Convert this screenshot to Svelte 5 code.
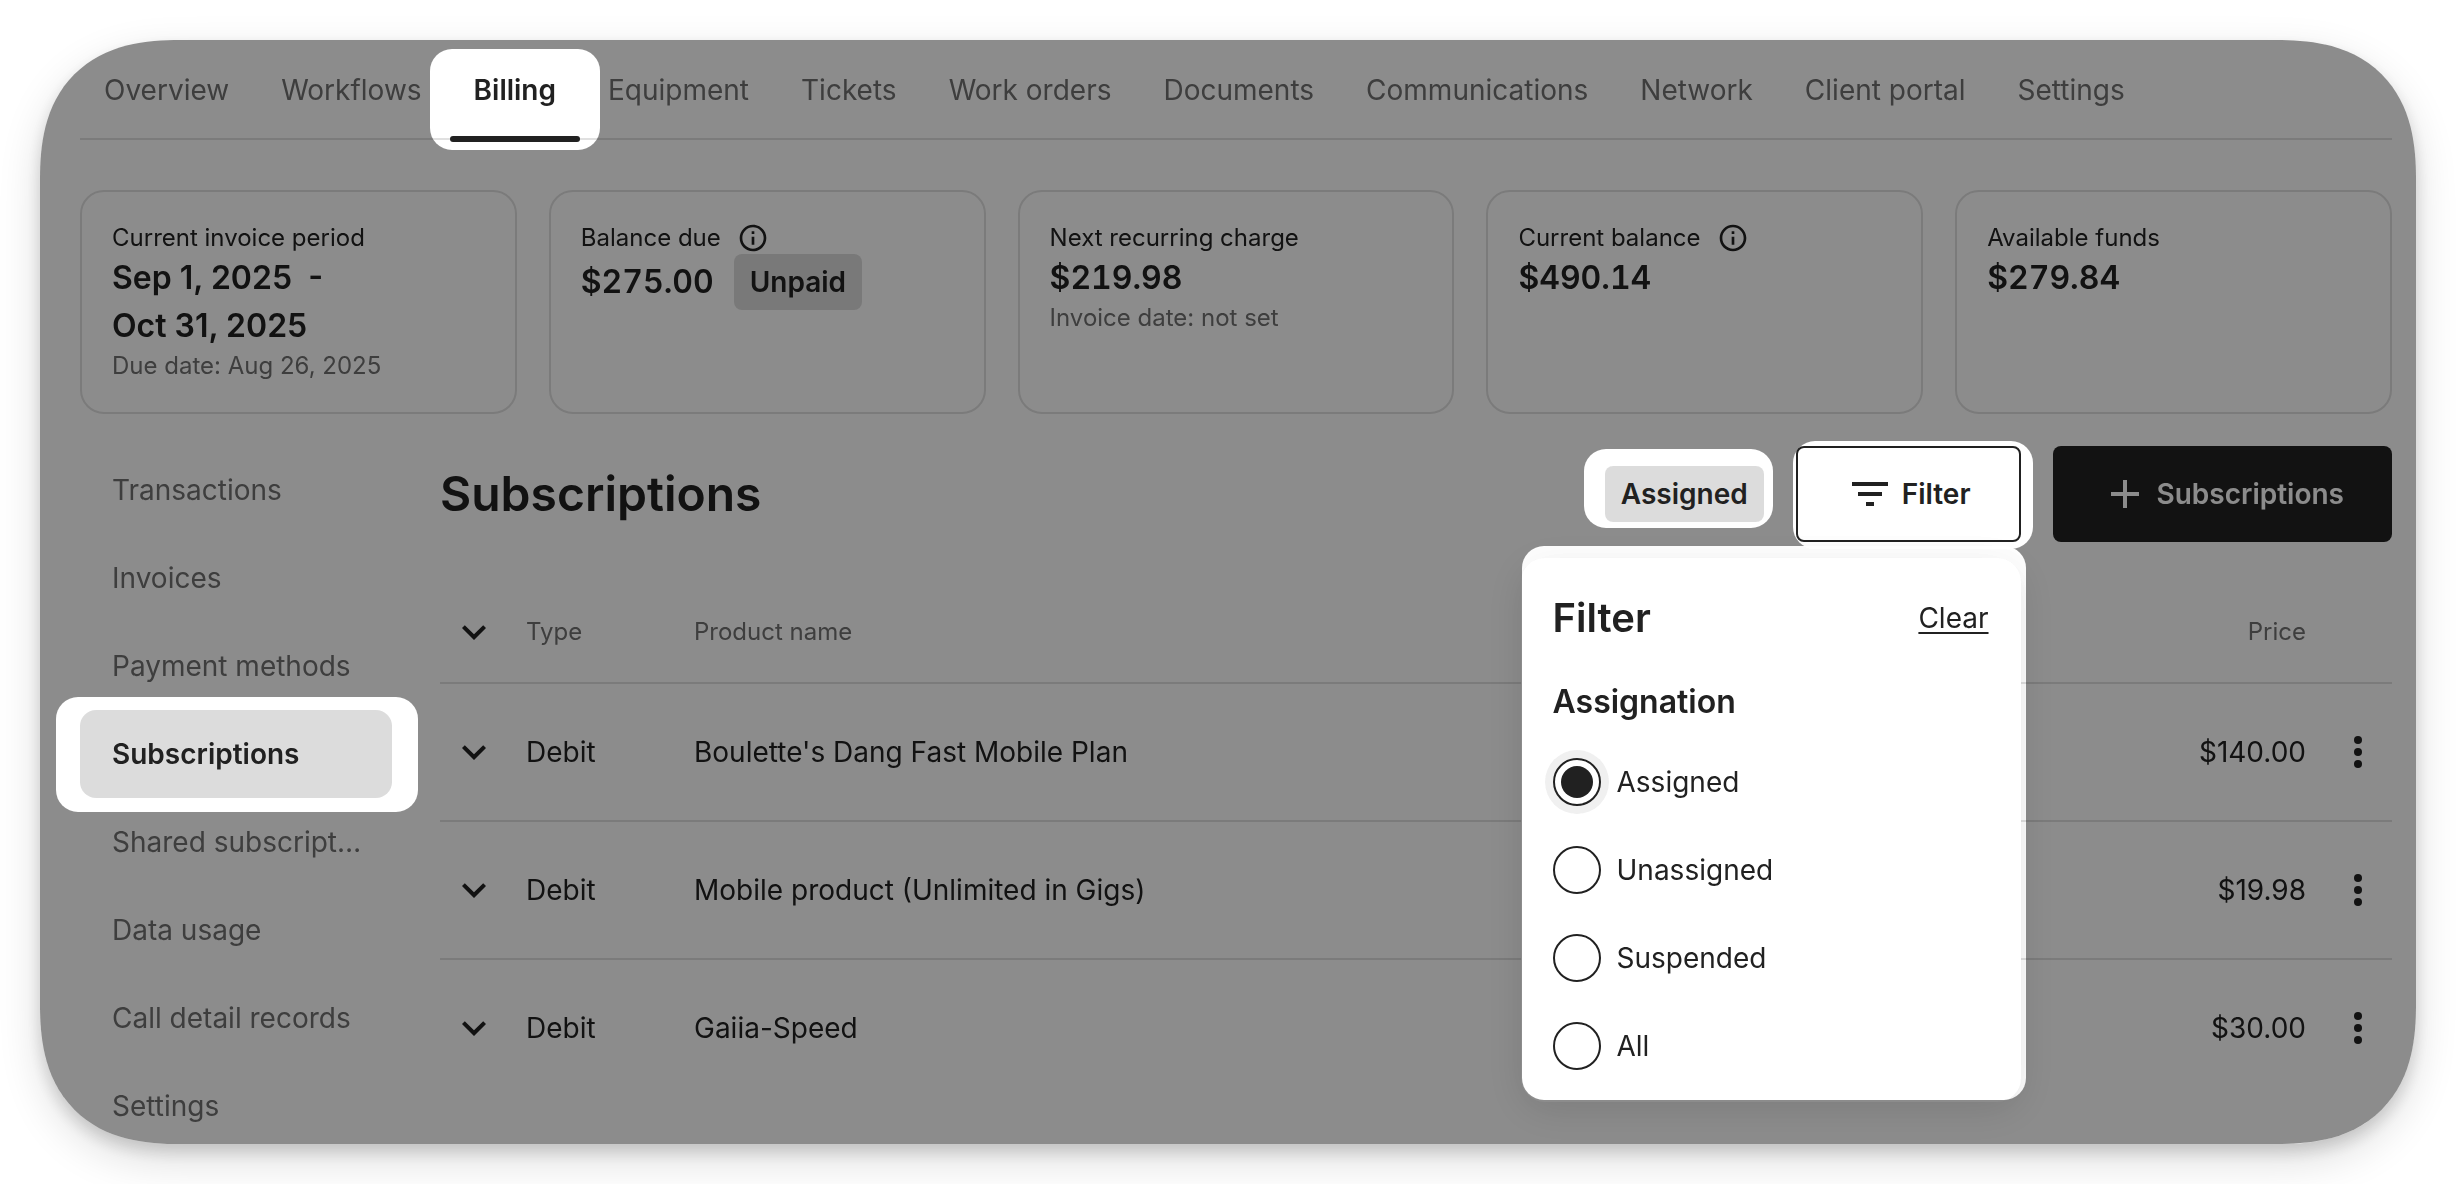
<script lang="ts">
  const tabs = [
    'Overview', 'Workflows', 'Billing', 'Equipment', 'Tickets', 'Work orders',
    'Documents', 'Communications', 'Network', 'Client portal', 'Settings',
  ];
  const sections = [
    'Transactions', 'Invoices', 'Payment methods', 'Subscriptions',
    'Shared subscript…', 'Data usage', 'Call detail records', 'Settings',
  ];
  const cards = [
    { label: 'Current invoice period', value: ['Sep 1, 2025  -', 'Oct 31, 2025'], note: 'Due date: Aug 26, 2025' },
    { label: 'Balance due', info: true, money: true, value: ['$275.00'], badge: 'Unpaid' },
    { label: 'Next recurring charge', money: true, value: ['$219.98'], note: 'Invoice date: not set' },
    { label: 'Current balance', info: true, money: true, value: ['$490.14'] },
    { label: 'Available funds', money: true, value: ['$279.84'] },
  ];
  const rows = [
    { type: 'Debit', name: "Boulette's Dang Fast Mobile Plan", price: '$140.00' },
    { type: 'Debit', name: 'Mobile product (Unlimited in Gigs)', price: '$19.98' },
    { type: 'Debit', name: 'Gaiia-Speed', price: '$30.00' },
  ];
  const options = ['Assigned', 'Unassigned', 'Suspended', 'All'];
  let assignation = $state('Assigned');
</script>

{#snippet chevron()}
  <svg class="icon" viewBox="0 0 24 24" aria-hidden="true"><path d="M7.41 8.59 12 13.17l4.59-4.58L18 10l-6 6-6-6z" /></svg>
{/snippet}

<div class="page">
  <div class="panel">
    <nav class="tabs" aria-label="Account">
      {#each tabs as tab}
        <a href="#top" class="tab" class:active={tab === 'Billing'}>
          {tab}
          {#if tab === 'Billing'}<span class="spot spot-tab"></span>{/if}
        </a>
      {/each}
    </nav>

    <section class="cards">
      {#each cards as card}
        <article class="card">
          <div class="label">
            {card.label}
            {#if card.info}
              <svg class="info" viewBox="0 0 24 24" aria-hidden="true">
                <path d="M11 7h2v2h-2zm0 4h2v6h-2zm1-9C6.480 2 2 6.480 2 12s4.480 10 10 10 10-4.480 10-10S17.520 2 12 2zm0 18c-4.410 0-8-3.590-8-8s3.590-8 8-8 8 3.590 8 8-3.590 8-8 8z" />
              </svg>
            {/if}
          </div>
          <div class="value">
            <div>{#each card.value as line}<div class="amount" class:money={card.money}>{line}</div>{/each}</div>
            {#if card.badge}<span class="chip">{card.badge}</span>{/if}
          </div>
          {#if card.note}<div class="note">{card.note}</div>{/if}
        </article>
      {/each}
    </section>

    <div class="body">
      <nav class="side" aria-label="Billing">
        {#each sections as section}
          <a href="#top" class="side-item" class:selected={section === 'Subscriptions'}>
            {section}
            {#if section === 'Subscriptions'}<span class="spot spot-side"></span>{/if}
          </a>
        {/each}
      </nav>

      <main class="main">
        <header class="head">
          <h1>Subscriptions</h1>
          <div class="anchor">
            <span class="chip">Assigned</span>
            <span class="spot spot-chip"></span>
          </div>
          <div class="anchor">
            <button class="btn outline" type="button">
              <svg class="icon" viewBox="0 0 24 24" aria-hidden="true"><path d="M10 18h4v-2h-4v2zM3 6v2h18V6H3zm3 7h12v-2H6v2z" /></svg>
              Filter
            </button>
            <span class="spot spot-btn"></span>
            <div class="menu-anchor">
              <form class="menu">
                <div class="menu-head">
                  <h2>Filter</h2>
                  <button class="clear" type="button">Clear</button>
                </div>
                <fieldset>
                  <legend>Assignation</legend>
                  {#each options as option}
                    <label class="option">
                      <input type="radio" name="assignation" value={option} bind:group={assignation} />
                      {option}
                    </label>
                  {/each}
                </fieldset>
              </form>
              <span class="spot spot-menu"></span>
            </div>
          </div>
          <button class="btn solid" type="button">
            <svg class="icon" viewBox="0 0 24 24" aria-hidden="true"><path d="M19 13h-6v6h-2v-6H5v-2h6V5h2v6h6z" /></svg>
            Subscriptions
          </button>
        </header>

        <table>
          <thead>
            <tr>
              <th class="c-toggle"><button class="icon-btn" type="button" aria-label="Expand all">{@render chevron()}</button></th>
              <th class="c-type">Type</th>
              <th>Product name</th>
              <th class="c-price">Price</th>
              <th class="c-more"></th>
            </tr>
          </thead>
          <tbody>
            {#each rows as row}
              <tr>
                <td class="c-toggle"><button class="icon-btn" type="button" aria-label="Expand">{@render chevron()}</button></td>
                <td>{row.type}</td>
                <td>{row.name}</td>
                <td class="c-price">{row.price}</td>
                <td class="c-more">
                  <button class="icon-btn" type="button" aria-label="More actions">
                    <svg class="icon" viewBox="0 0 24 24" aria-hidden="true"><circle cx="12" cy="6" r="2" /><circle cx="12" cy="12" r="2" /><circle cx="12" cy="18" r="2" /></svg>
                  </button>
                </td>
              </tr>
            {/each}
          </tbody>
        </table>
      </main>
    </div>
  </div>
</div>

<style>
  :global(body) {
    margin: 0;
    background: #fff;
  }
  .page {
    box-sizing: border-box;
    height: 100vh;
    padding: 40px;
    overflow: hidden;
    font-family: Inter, 'Liberation Sans', sans-serif;
    font-optical-sizing: none;
    font-size: 28px;
    line-height: 40px;
    color: #222;
  }
  .panel {
    position: relative;
    isolation: isolate;
    box-sizing: border-box;
    height: 100%;
    padding: 0 24px 0 40px;
    overflow: hidden;
    background: #fff;
    border-radius: 120px;
    box-shadow: 0 8px 16px rgba(0, 0, 0, 0.15), 0 16px 44px rgba(0, 0, 0, 0.14);
  }
  @supports (corner-shape: squircle) {
    .panel {
      border-radius: 140px;
      corner-shape: superellipse(1.3);
    }
  }
  /* Dims everything; each .spot undoes the dimming for the area it covers. */
  .panel::after {
    content: '';
    position: absolute;
    inset: 0;
    z-index: 2;
    background: rgba(0, 0, 0, 0.45);
    pointer-events: none;
  }
  .spot {
    position: absolute;
    z-index: 3;
    border-radius: 22px;
    background: #737373;
    mix-blend-mode: color-dodge;
    pointer-events: none;
  }
  .spot-tab { inset: 9px -20px -12px; }
  .spot-side { inset: -13px -26px -14px -24px; }
  .spot-chip { inset: -17px -9px -6px -21px; }
  .spot-btn { inset: -5px -12px -7px -3px; }
  .spot-menu { inset: -12px -5px 2px 1px; }

  a { color: inherit; text-decoration: none; }
  button { font: inherit; color: inherit; border: 0; background: none; padding: 0; cursor: pointer; }
  h1, h2 { margin: 0; font-weight: 600; }
  .icon { display: block; width: 48px; height: 48px; fill: currentColor; }

  .tabs {
    display: flex;
    gap: 4px;
    border-bottom: 2px solid #e0e0e0;
  }
  .tab {
    position: relative;
    padding: 30px 24px 28px;
    color: #717171;
    white-space: nowrap;
  }
  .tab.active { color: #222; font-weight: 600; }
  .tab.active::after {
    content: '';
    position: absolute;
    inset: auto 0 -4px;
    height: 6px;
    border-radius: 3px;
    background: #222;
  }

  .cards {
    display: grid;
    grid-template-columns: repeat(5, 1fr);
    gap: 32px;
    margin: 50px 0 32px;
  }
  .card {
    padding: 30px;
    border: 2px solid #e0e0e0;
    border-radius: 24px;
    font-size: 24px;
    line-height: 32px;
  }
  .label { display: flex; gap: 16px; }
  .info { width: 32px; height: 32px; fill: currentColor; }
  .value { display: flex; align-items: center; gap: 20px; }
  .amount { font-size: 32px; line-height: 48px; font-weight: 600; white-space: pre; }
  .money { font-variant-numeric: tabular-nums; }
  .note { color: #717171; }
  .chip {
    display: block;
    padding: 8px 16px;
    border-radius: 8px;
    background: #ddd;
    font-size: 28px;
    line-height: 40px;
    font-weight: 600;
  }

  .body { display: flex; gap: 48px; }
  .side { flex: 0 0 312px; min-width: 0; }
  .side-item {
    position: relative;
    display: block;
    padding: 24px 16px 24px 32px;
    border-radius: 16px;
    color: #717171;
    white-space: nowrap;
  }
  .side-item.selected { background: #ddd; color: #222; font-weight: 600; }

  .main { flex: 1; min-width: 0; }
  .head { display: flex; align-items: center; gap: 32px; margin-bottom: 40px; }
  h1 { flex: 1; font-size: 48px; line-height: 64px; }
  .anchor { position: relative; }
  .btn {
    display: flex;
    align-items: center;
    gap: 8px;
    box-sizing: border-box;
    height: 96px;
    padding: 0 48px;
    border-radius: 8px;
    font-weight: 600;
    white-space: nowrap;
  }
  .outline { border: 2px solid #222; background: #fff; }
  .solid { background: #222; color: #fff; }

  .menu-anchor {
    position: absolute;
    top: calc(100% + 16px);
    right: 0;
    width: 500px;
  }
  .menu {
    position: relative;
    z-index: 1;
    padding: 32px;
    border-radius: 24px;
    background: #fff;
    box-shadow: 0 8px 40px rgba(0, 0, 0, 0.12);
  }
  .menu-head {
    display: flex;
    align-items: center;
    justify-content: space-between;
    margin-bottom: 32px;
  }
  h2 { font-size: 40px; line-height: 56px; }
  .clear { text-decoration: underline; text-underline-offset: 4px; text-decoration-thickness: 2px; }
  fieldset { display: flex; flex-direction: column; gap: 40px; margin: 0; padding: 0; border: 0; }
  legend { padding: 0; margin-bottom: 32px; font-size: 32px; line-height: 48px; font-weight: 600; }
  .option { display: flex; align-items: center; gap: 16px; }
  input {
    appearance: none;
    display: grid;
    place-items: center;
    box-sizing: border-box;
    width: 48px;
    height: 48px;
    margin: 0;
    border: 2px solid #222;
    border-radius: 50%;
    background: #fff;
  }
  input:checked { box-shadow: 0 0 0 8px #f1f1f1; }
  input:checked::before {
    content: '';
    width: 32px;
    height: 32px;
    border-radius: 50%;
    background: #222;
  }

  table { width: 100%; border-collapse: separate; border-spacing: 0; table-layout: fixed; }
  th, td { padding: 0; text-align: left; border-bottom: 2px solid #e0e0e0; }
  th { height: 100px; font-size: 24px; font-weight: 400; color: #717171; }
  td { height: 136px; }
  tbody tr:last-child td { border-bottom: 0; }
  .icon-btn { display: block; color: #222; }
  .c-toggle { width: 76px; padding-left: 10px; }
  .c-type { width: 168px; }
  .c-price { width: 240px; text-align: right; }
  .c-more { width: 58px; padding-left: 28px; }
</style>
